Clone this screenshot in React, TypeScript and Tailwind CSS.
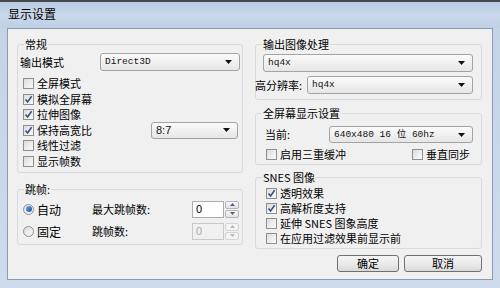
const cjk = "font-['Noto_Sans_CJK_SC','Noto_Sans',sans-serif]";
const mono = "font-['Liberation_Mono','Noto_Sans_CJK_SC',monospace]";

function Check({ on }: { on?: boolean }) {
  return (
    <span className="flex h-[11px] w-[11px] shrink-0 items-center justify-center border border-[#8e8f8f] bg-gradient-to-br from-[#dcdcdc] to-[#fbfbfb]">
      {on && (
        <svg width="9" height="9" viewBox="0 0 9 9">
          <path d="M1.5 4.5 L3.6 7 L7.6 1.2" fill="none" stroke="#3b4f86" strokeWidth="1.6" />
        </svg>
      )}
    </span>
  );
}

function Radio({ on }: { on?: boolean }) {
  return (
    <span className="flex h-[11px] w-[11px] shrink-0 items-center justify-center rounded-full border border-[#8e8f8f] bg-gradient-to-br from-[#dadada] to-[#fafafa]">
      {on && <span className="h-[6px] w-[6px] rounded-full bg-gradient-to-br from-[#6fa6e8] to-[#1d4f9c]" />}
    </span>
  );
}

function Arrow() {
  return (
    <svg width="7" height="4" viewBox="0 0 7 4" className="shrink-0">
      <path d="M0 0 H7 L3.5 4 Z" fill="#111" />
    </svg>
  );
}

function Select({ value, className, font }: { value: string; className: string; font?: string }) {
  return (
    <div
      className={`flex items-center justify-between rounded-[3px] border border-[#a3a3a3] bg-gradient-to-b from-[#fbfbfb] to-[#e6e6e6] pl-[4px] pr-[7px] ${className}`}
    >
      <span className={`text-[9.5px] leading-none text-[#111] ${font ?? mono}`}>{value}</span>
      <Arrow />
    </div>
  );
}

function Spin({ disabled }: { disabled?: boolean }) {
  return (
    <div className="flex h-[17px] w-[47px] items-center">
      <div
        className={`flex h-full w-[32px] items-center border pl-[3px] font-['Liberation_Sans',sans-serif] text-[11px] ${
          disabled ? "border-[#c8c8c8] bg-[#f0f0f0] text-[#a8a8a8]" : "border-[#abadb3] bg-white text-black"
        }`}
      >
        0
      </div>
      <div className="ml-[1px] flex h-full w-[14px] flex-col gap-px">
        {[0, 1].map((i) => (
          <div
            key={i}
            className={`flex flex-1 items-center justify-center rounded-[2px] border ${
              disabled ? "border-[#d4d4d4] bg-[#f4f4f4]" : "border-[#b5b5b5] bg-gradient-to-b from-[#f7f7f7] to-[#e3e3e3]"
            }`}
          >
            <svg width="5" height="3" viewBox="0 0 5 3">
              <path d={i === 0 ? "M0 3 H5 L2.5 0 Z" : "M0 0 H5 L2.5 3 Z"} fill={disabled ? "#b8b8b8" : "#4d6185"} />
            </svg>
          </div>
        ))}
      </div>
    </div>
  );
}

function CheckRow({ label, on }: { label: string; on?: boolean }) {
  return (
    <div className="flex items-center gap-[3px]">
      <Check on={on} />
      <span>{label}</span>
    </div>
  );
}

function Group({ title, className, children }: { title: string; className: string; children: React.ReactNode }) {
  return (
    <fieldset className={`rounded-[3px] border border-[#d5dbe0] ${className}`}>
      <legend className="ml-[6px] px-[1px] leading-[12px]">{title}</legend>
      {children}
    </fieldset>
  );
}

function Button({ label, className }: { label: string; className: string }) {
  return (
    <div
      className={`flex h-[17px] items-center justify-center rounded-[3px] border border-[#707070] bg-gradient-to-b from-[#f4f4f4] via-[#ebebeb] to-[#d9d9d9] ${className}`}
    >
      {label}
    </div>
  );
}

export default function App() {
  return (
    <div className={`flex h-[288px] w-[500px] flex-col bg-gradient-to-b from-[#c3d3e6] to-[#cddbec] text-[11px] leading-[13px] text-black ${cjk}`}>
      <div className="flex h-[28px] shrink-0 items-center border-t-2 border-[#474a4f] bg-gradient-to-b from-[#b9cbe2] via-[#c9d8ea] to-[#bfd0e5] pb-[3px] pl-[8px] text-[12px]">
        显示设置
      </div>
      <div className="mx-[7px] flex h-[252px] flex-col border border-[#8a9bb0] bg-[#f0f0f0]">
        <div className="flex gap-[12px] pl-[9px] pt-[9px]">
          <div className="flex w-[226px] flex-col">
            <Group title="常规" className="w-[226px] pb-[3px]">
              <div className="mt-[3px] flex h-[18px] items-center pl-[2px]">
                <span className="w-[80px]">输出模式</span>
                <Select value="Direct3D" className="h-[18px] w-[140px]" />
              </div>
              <div className="mt-[5px] flex flex-col pl-[5px]">
                {[
                  ["全屏模式", false],
                  ["模拟全屏幕", true],
                  ["拉伸图像", true],
                ].map(([l, on]) => (
                  <div key={l as string} className="flex h-[15.5px] items-center">
                    <CheckRow label={l as string} on={on as boolean} />
                  </div>
                ))}
                <div className="flex h-[15.5px] items-center justify-between pr-[4px]">
                  <CheckRow label="保持高宽比" on />
                  <Select
                    value="8:7"
                    font="font-['Liberation_Sans',sans-serif] text-[11px]"
                    className="h-[17px] w-[87px]"
                  />
                </div>
                {["线性过滤", "显示帧数"].map((l) => (
                  <div key={l} className="flex h-[15.5px] items-center">
                    <CheckRow label={l} />
                  </div>
                ))}
              </div>
            </Group>
            <Group title="跳帧:" className="mt-[10px] w-[226px] pb-[3px]">
              <div className="mt-[4px] flex flex-col gap-[2px] pl-[5px]">
                {[
                  ["自动", "最大跳帧数:", true],
                  ["固定", "跳帧数:", false],
                ].map(([r, l, on]) => (
                  <div key={r as string} className="flex h-[20px] items-center">
                    <div className="flex w-[69px] items-center gap-[3px]">
                      <Radio on={on as boolean} />
                      <span className="text-[12px]">{r as string}</span>
                    </div>
                    <span className="w-[100px]">{l as string}</span>
                    <Spin disabled={!on} />
                  </div>
                ))}
              </div>
            </Group>
          </div>
          <div className="flex w-[227px] flex-col">
            <Group title="输出图像处理" className="w-[227px] pb-[5px]">
              <Select value="hq4x" className="ml-[7px] mt-[4px] h-[18px] w-[210px]" />
              <div className="mt-[4px] flex h-[18px] items-center">
                <span className="-ml-px w-[52px]">高分辨率:</span>
                <Select value="hq4x" className="h-[18px] w-[166px]" />
              </div>
            </Group>
            <Group title="全屏幕显示设置" className="mt-[7px] w-[227px] pb-[3px]">
              <div className="mt-[7px] flex h-[17px] items-center pl-[9px]">
                <span className="w-[64px]">当前:</span>
                <Select value="640x480 16 位 60hz" className="h-[17px] w-[144px]" />
              </div>
              <div className="mt-[4px] flex h-[14px] items-center pl-[10px]">
                <div className="w-[146px]">
                  <CheckRow label="启用三重缓冲" />
                </div>
                <CheckRow label="垂直同步" />
              </div>
            </Group>
            <Group title="SNES 图像" className="mt-[6px] w-[227px] pb-[2px]">
              <div className="mt-[2.5px] flex flex-col pl-[10px]">
                {[
                  ["透明效果", true],
                  ["高解析度支持", true],
                  ["延伸 SNES 图象高度", false],
                  ["在应用过滤效果前显示前", false],
                ].map(([l, on]) => (
                  <div key={l as string} className="flex h-[15px] items-center">
                    <CheckRow label={l as string} on={on as boolean} />
                  </div>
                ))}
              </div>
            </Group>
          </div>
        </div>
        <div className="mt-[6px] flex justify-end gap-[5px] pr-[10px]">
          <Button label="确定" className="w-[62px]" />
          <Button label="取消" className="w-[78px]" />
        </div>
      </div>
    </div>
  );
}
